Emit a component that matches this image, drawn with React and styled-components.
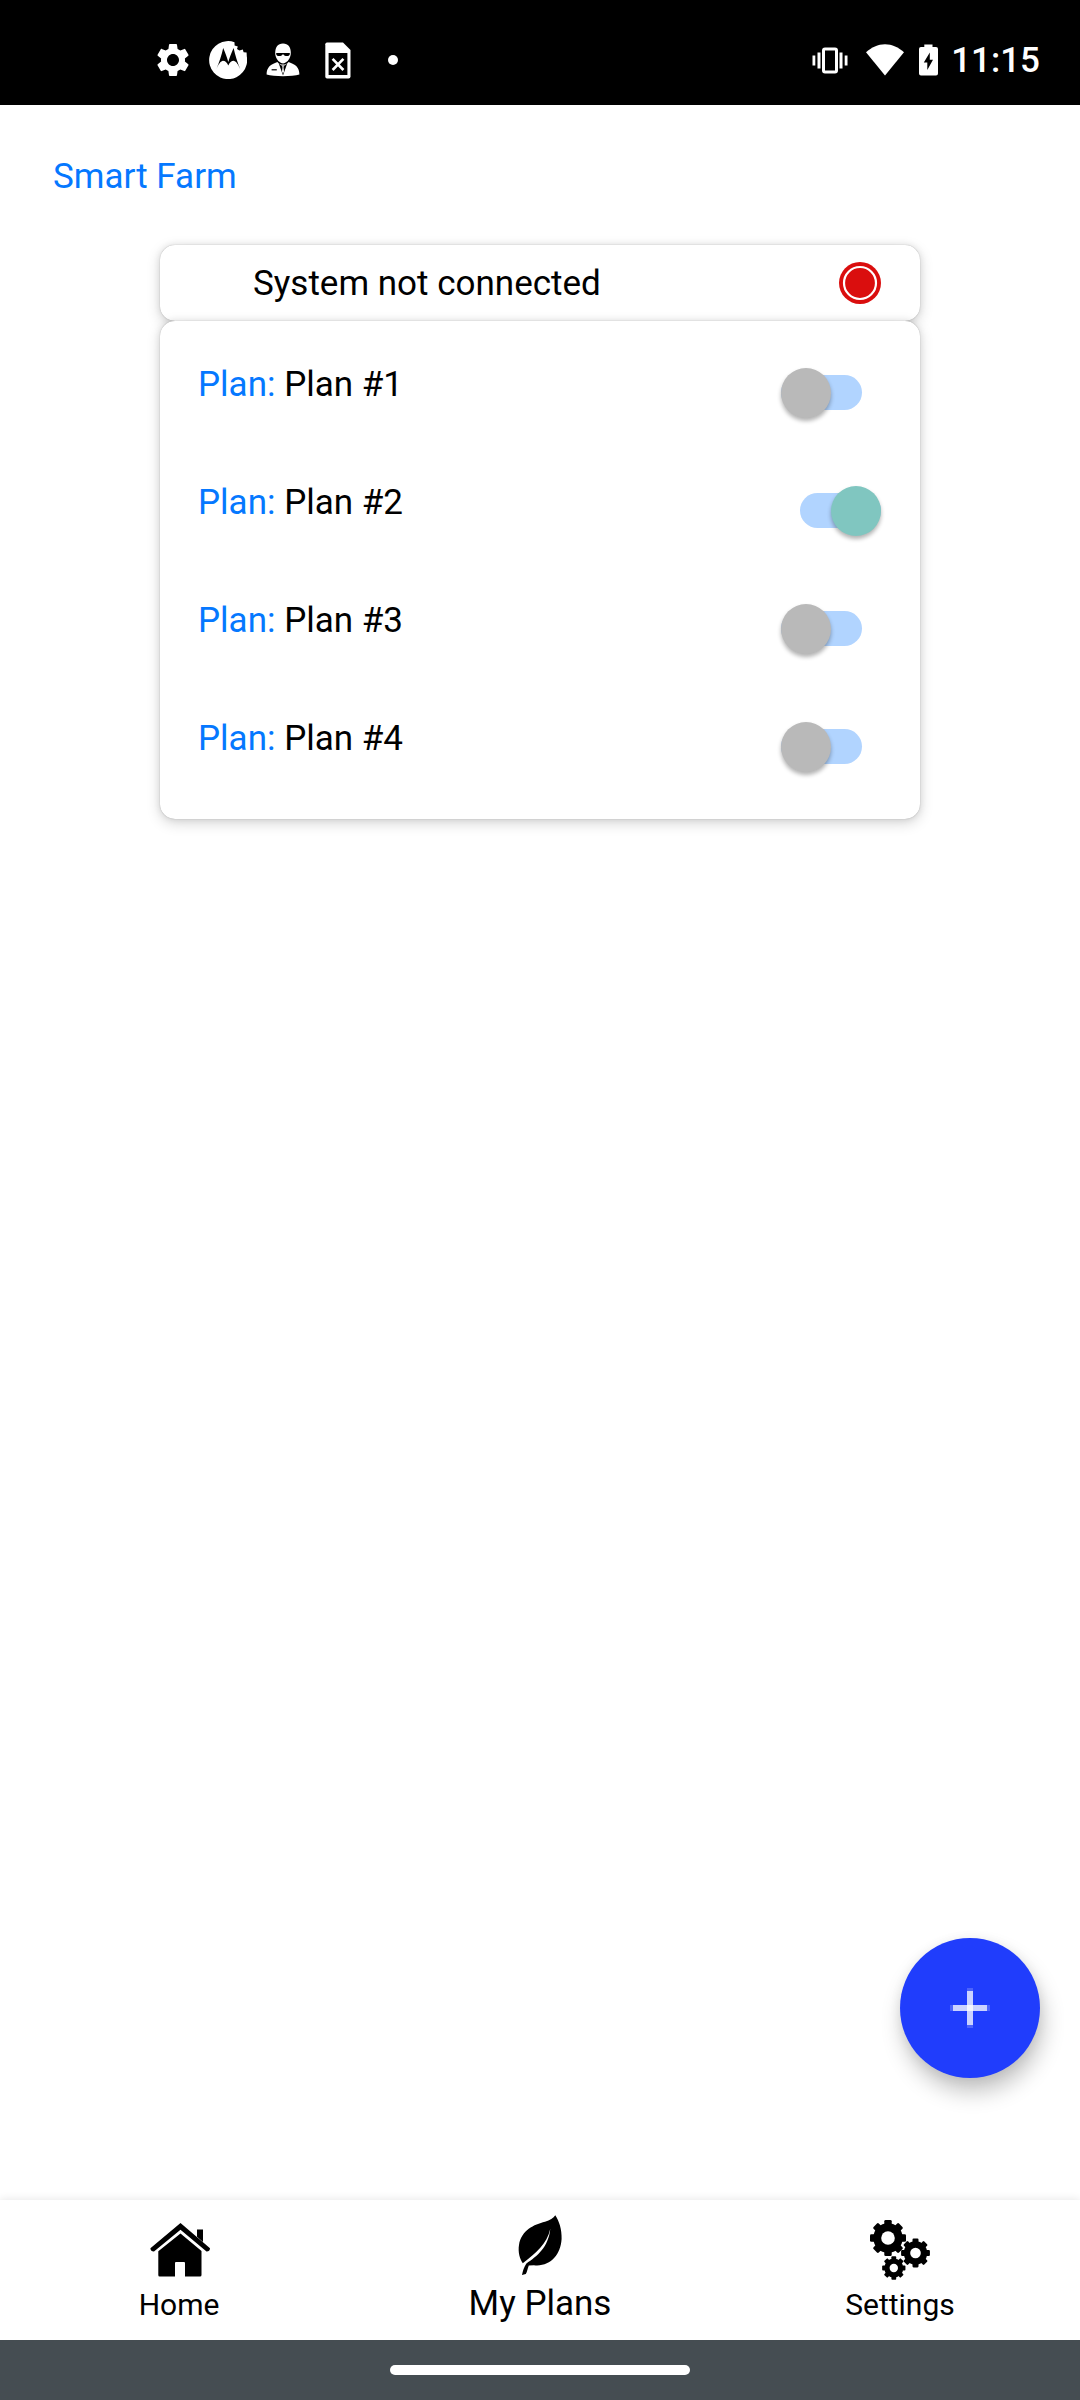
import React, { useState } from "react";
import styled, { createGlobalStyle } from "styled-components";
import { MdSettings } from "react-icons/md";

const GlobalStyle = createGlobalStyle`
  * { box-sizing: border-box; }
  body {
    margin: 0;
    background: #fff;
    font-family: Roboto, "Liberation Sans", sans-serif;
    color: #000;
  }
`;

const Screen = styled.div`
  width: 1080px;
  height: 2400px;
  display: flex;
  flex-direction: column;
  background: #fff;
  font-size: 35px;
  line-height: 42px;
`;

const StatusBar = styled.header`
  height: 105px;
  flex: none;
  display: flex;
  justify-content: space-between;
  align-items: center;
  padding: 15px 40px 0 153px;
  background: #000;
  color: #fff;
`;

const StatusGroup = styled.div`
  display: flex;
  align-items: center;

  svg {
    display: block;
  }
`;

const StatusItem = styled.span`
  flex: none;
  margin-left: ${(p) => p.$before || 0}px;
`;

const Clock = styled.time`
  margin-left: 13px;
  padding-top: 2px;
  font-weight: 500;
  line-height: 42px;
`;

const Title = styled.h1`
  margin: 0;
  height: 140px;
  flex: none;
  padding: 51px 53px 0;
  font-size: 35px;
  font-weight: 400;
  line-height: 42px;
  color: #0578ff;
`;

const Content = styled.main`
  flex: 1;
  display: flex;
  flex-direction: column;
  align-items: center;
  position: relative;
`;

const Card = styled.section`
  width: 760px;
  border-radius: 15px;
  background: #fff;
  box-shadow: 0 0 1px rgba(0, 0, 0, 0.32), 0 0 7px rgba(0, 0, 0, 0.09),
    0 4px 14px rgba(0, 0, 0, 0.17);
`;

const ConnectionCard = styled(Card)`
  height: 76px;
  display: flex;
  justify-content: space-between;
  align-items: center;
  padding: 0 39px 0 93px;
`;

const ConnectionText = styled.span`
  padding-top: 2px;
`;

const PlansCard = styled(Card)`
  height: 498px;
  display: flex;
  flex-direction: column;
  gap: 63px;
  padding: 42px 39px 0 38px;
`;

const PlanRow = styled.div`
  height: 55px;
  display: flex;
  justify-content: space-between;
`;

const PlanName = styled.span`
  padding-top: 1px;
  white-space: pre;
`;

const PlanLabel = styled.span`
  color: #0578ff;
`;

const Toggle = styled.button`
  width: 81px;
  height: 50px;
  margin: 5px ${(p) => (p.$on ? 0 : 19)}px 0 0;
  padding: 0;
  border: 0;
  display: flex;
  align-items: center;
  justify-content: ${(p) => (p.$on ? "flex-end" : "flex-start")};
  background: none;
  position: relative;

  &::before {
    content: "";
    position: absolute;
    inset: 7px 0 8px;
    border-radius: 18px;
    background: #b1d4ff;
  }
`;

const Thumb = styled.span`
  position: relative;
  width: 50px;
  height: 50px;
  border-radius: 50%;
  background: ${(p) => (p.$on ? "#80c6c0" : "#b9b9b9")};
  box-shadow: 0 3px 4px rgba(0, 0, 0, 0.3);
`;

const AddButton = styled.button`
  position: absolute;
  right: 40px;
  bottom: 122px;
  width: 140px;
  height: 140px;
  padding: 0;
  border: 0;
  border-radius: 50%;
  display: grid;
  place-items: center;
  background: #203dfc;
  box-shadow: 3px 14px 22px rgba(0, 0, 0, 0.23), 0 2px 12px rgba(0, 0, 0, 0.07);
`;

const TabBar = styled.nav`
  height: 140px;
  flex: none;
  display: grid;
  grid-template-columns: repeat(3, 1fr);
  background: #fff;
  box-shadow: 0 -1px 8px rgba(0, 0, 0, 0.09);
`;

const Tab = styled.a`
  display: flex;
  flex-direction: column;
  align-items: center;
  padding-top: ${(p) => (p.$active ? 15 : 20)}px;
  font-size: ${(p) => (p.$active ? 35 : 30)}px;
  line-height: 42px;

  svg {
    display: block;
    flex: none;
    margin-bottom: ${(p) => (p.$active ? 8 : 4)}px;
  }
`;

const TabLabel = styled.span`
  margin-right: ${(p) => p.$shift || 0}px;
`;

const GestureBar = styled.footer`
  height: 60px;
  flex: none;
  display: flex;
  justify-content: center;
  padding-top: 25px;
  background: #454d52;
`;

const GestureHandle = styled.div`
  width: 300px;
  height: 10px;
  border-radius: 5px;
  background: #fff;
`;

const MotoIcon = () => (
  <svg width="38" height="38" viewBox="0 0 38 38">
    <path
      fill="#fff"
      d="M25.500 1.200A19 19 0 1 0 37.800 15.500L37.600 11.600L34.600 11.200L33.800 8.600L30.400 9.600L28 8L28.800 5.600L25.600 4.400Z"
    />
    <path
      fill="#000"
      d="M7.300 28.300C10 22 12.600 14 14.200 7C16.200 11.500 18 16.500 19.300 21C20.600 16.500 22.600 11.500 24.600 7C26.200 14 28.600 22 31.300 28.300C29.400 24 27.400 20.500 24.800 19.800C22.400 19.800 20.600 21.600 19.300 24.600C18 21.600 16.200 19.800 13.800 19.800C11.200 20.500 9.200 24 7.300 28.300Z"
    />
  </svg>
);

const AgentIcon = () => (
  <svg width="34" height="34" viewBox="0 0 34 34">
    <path
      fill="#fff"
      d="M17 .6C22.300 .6 24.800 4.400 24.800 10C24.800 14.400 22 19.600 17 20.400C12 19.600 9.200 14.400 9.200 10C9.200 4.400 11.700 .6 17 .6Z"
    />
    <path fill="#000" d="M10.200 10H23.800V11.200C23.400 13.600 18.600 13.800 17.600 11.400H16.400C15.400 13.800 10.600 13.600 10.200 11.200Z" />
    <path
      fill="#fff"
      d="M.6 31.600C.6 24 4.800 21.400 11.400 19C12.800 20.800 14.600 21.600 17 21.600C19.400 21.600 21.200 20.800 22.600 19C29.200 21.400 33.400 24 33.400 31.600C26 33.800 8 33.800 .6 31.600Z"
    />
    <path fill="#000" d="M12.800 20.500L17 32.600L21.200 20.500L18.600 22.600H15.400Z" />
    <path fill="#fff" d="M16.200 22.600H17.800L17.500 24.800L18 28.500L17 30.800L16 28.500L16.500 24.800Z" />
    <path stroke="#000" strokeWidth="1.200" d="M5.600 26.800H10.800" />
  </svg>
);

const SimIcon = () => (
  <svg width="26" height="37" viewBox="0 0 26 37">
    <path fill="#fff" d="M2 .5H18L25.500 8V34.500Q25.500 36.500 23.500 36.500H2Q.3 36.500 .3 34.500V2.200Q.3 .5 2 .5Z" />
    <path fill="#000" d="M3.600 11H22.400V33H3.600Z" />
    <path stroke="#fff" strokeWidth="2.600" d="M7.600 16.800L18.400 28M18.400 16.800L7.600 28" />
  </svg>
);

const DotIcon = () => (
  <svg width="10" height="10" viewBox="0 0 10 10">
    <circle cx="5" cy="5" r="5" fill="#fff" />
  </svg>
);

const VibrateIcon = () => (
  <svg width="36" height="27" viewBox="0 0 36 27">
    <rect x="11.500" y="2" width="13" height="23" rx="1.500" fill="none" stroke="#fff" strokeWidth="3" />
    <path stroke="#fff" strokeWidth="3" d="M7 5.500V21.500M29 5.500V21.500" />
    <path stroke="#fff" strokeWidth="2.800" d="M1.900 8.500V18.500M34.100 8.500V18.500" />
  </svg>
);

const WifiIcon = () => (
  <svg width="38" height="32" viewBox="0 0 38 32">
    <path fill="#fff" d="M19 31.500L0 8.200C5.500 3.200 12 .2 19 .2S32.500 3.200 38 8.200Z" />
  </svg>
);

const BatteryIcon = () => (
  <svg width="19" height="32" viewBox="0 0 19 32">
    <path
      fill="#fff"
      d="M5.300 .5H13.500V3H17Q19 3 19 5V29.500Q19 31.500 17 31.500H2Q0 31.500 0 29.500V5Q0 3 2 3H5.300Z"
    />
    <path fill="#000" d="M10.800 8.500L4.800 18.500H8.300V26L14 15.800H10.800Z" />
  </svg>
);

const StatusLight = () => (
  <svg width="42" height="42" viewBox="0 0 42 42">
    <circle cx="21" cy="21" r="21" fill="#da0e0e" />
    <circle cx="21" cy="21" r="16" fill="none" stroke="#fff" strokeWidth="2.200" />
  </svg>
);

const PlusIcon = () => (
  <svg width="40" height="40" viewBox="0 0 40 40">
    <path fill="#fff" fillOpacity="0.770" d="M3 17H37V23H3Z" />
    <path fill="#fff" fillOpacity="0.770" d="M17 3H23V37H17Z" />
    <path fill="#fff" fillOpacity="0.200" d="M0 17H3V23H0ZM37 17H40V23H37ZM17 0H23V3H17ZM17 37H23V40H17Z" />
  </svg>
);

const HomeIcon = () => (
  <svg width="60" height="60" viewBox="0 0 60 60">
    <path d="M30.500 3L60 28.200Q59.800 31.500 56.500 31.400L30.500 9.800L4 31.400Q.7 31.500 .4 28.200Z" />
    <path d="M47 9.500H53V22L47 16.800Z" />
    <path d="M30.500 13.500L51.500 31V55Q51.500 56.600 50 56.600H35V43Q35 42 34 42H26Q25 42 25 43V56.600H9.600Q8.300 56.600 8.300 55V31.200Z" />
  </svg>
);

const LeafIcon = () => (
  <svg width="60" height="60" viewBox="0 0 60 60">
    <path d="M45.300 .2C49 6 52 14 51.600 24C50.600 40 40 52 24 50.200L18.800 50.400C17.600 53.500 17.200 56.500 15.800 59L12 60C12.800 55.500 14 52 16.400 48.400C27 41.500 38.600 32 40.300 13.800C37 29 25.600 38.600 12.800 48.200C9.800 44 7.800 37 9 30C11.500 15 24 9.500 35 6.700C40 5 43.500 3 45.300 .2Z" />
  </svg>
);

const GEARS = [
  { x: 18, y: 18, r: 15, hole: 6.8, tooth: 3.7 },
  { x: 45.5, y: 33, r: 12, hole: 5.3, tooth: 3 },
  { x: 23.8, y: 48, r: 9.7, hole: 4.2, tooth: 2.4 },
];

const GearsIcon = () => (
  <svg width="60" height="60" viewBox="0 0 60 60">
    {GEARS.map((g) => (
      <g key={g.x} transform={`translate(${g.x} ${g.y})`}>
        {[0, 45, 90, 135].map((a) => (
          <rect
            key={a}
            x={-g.tooth}
            y={-g.r * 1.2}
            width={g.tooth * 2}
            height={g.r * 2.4}
            rx={g.tooth * 0.35}
            transform={`rotate(${a})`}
          />
        ))}
        <circle r={g.r * 0.98} />
        <circle r={g.hole} fill="#fff" />
      </g>
    ))}
  </svg>
);

const INITIAL_PLANS = [
  { name: "Plan #1", on: false },
  { name: "Plan #2", on: true },
  { name: "Plan #3", on: false },
  { name: "Plan #4", on: false },
];

const TABS = [
  { label: "Home", Icon: HomeIcon, shift: 2 },
  { label: "My Plans", Icon: LeafIcon, active: true },
  { label: "Settings", Icon: GearsIcon },
];

export default function App() {
  const [plans, setPlans] = useState(INITIAL_PLANS);
  const flip = (index) =>
    setPlans(plans.map((p, i) => (i === index ? { ...p, on: !p.on } : p)));

  return (
    <Screen>
      <GlobalStyle />
      <StatusBar>
        <StatusGroup>
          <StatusItem>
            <MdSettings size={40} />
          </StatusItem>
          <StatusItem $before={16}>
            <MotoIcon />
          </StatusItem>
          <StatusItem $before={19}>
            <AgentIcon />
          </StatusItem>
          <StatusItem $before={25}>
            <SimIcon />
          </StatusItem>
          <StatusItem $before={37}>
            <DotIcon />
          </StatusItem>
        </StatusGroup>
        <StatusGroup>
          <StatusItem>
            <VibrateIcon />
          </StatusItem>
          <StatusItem $before={18}>
            <WifiIcon />
          </StatusItem>
          <StatusItem $before={15}>
            <BatteryIcon />
          </StatusItem>
          <Clock>11:15</Clock>
        </StatusGroup>
      </StatusBar>
      <Title>Smart Farm</Title>
      <Content>
        <ConnectionCard>
          <ConnectionText>System not connected</ConnectionText>
          <StatusLight />
        </ConnectionCard>
        <PlansCard>
          {plans.map((plan, i) => (
            <PlanRow key={plan.name}>
              <PlanName>
                <PlanLabel>Plan: </PlanLabel>
                {plan.name}
              </PlanName>
              <Toggle $on={plan.on} onClick={() => flip(i)} aria-label={plan.name}>
                <Thumb $on={plan.on} />
              </Toggle>
            </PlanRow>
          ))}
        </PlansCard>
        <AddButton aria-label="Add plan">
          <PlusIcon />
        </AddButton>
      </Content>
      <TabBar>
        {TABS.map(({ label, Icon, active, shift }) => (
          <Tab key={label} $active={active}>
            <Icon />
            <TabLabel $shift={shift}>{label}</TabLabel>
          </Tab>
        ))}
      </TabBar>
      <GestureBar>
        <GestureHandle />
      </GestureBar>
    </Screen>
  );
}
